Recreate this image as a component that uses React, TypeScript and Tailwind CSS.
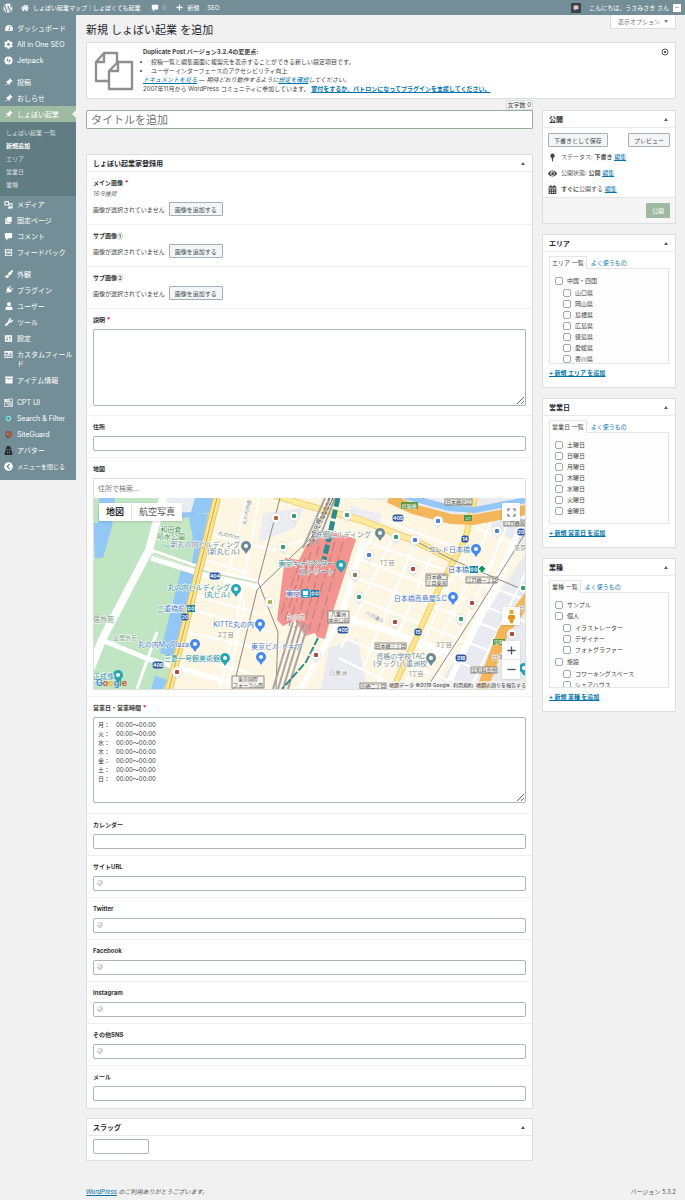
import React from "react";
import {
  FaArchive,
  FaCalendarAlt,
  FaChevronCircleLeft,
  FaCog,
  FaEye,
  FaGlobeAsia,
  FaHome,
  FaPaintBrush,
  FaPlug,
  FaPlus,
  FaTachometerAlt,
  FaUser,
  FaUserSecret,
  FaWordpress,
  FaWrench,
} from "react-icons/fa";
import { BsPinAngleFill } from "react-icons/bs";

/* ---------- small drawn icons ---------- */

function Glyph({ children, className = "size-[9px]" }: { children: React.ReactNode; className?: string }) {
  return (
    <svg viewBox="0 0 20 20" className={className} fill="currentColor" aria-hidden="true">
      {children}
    </svg>
  );
}

const bubble = <path d="M3 2h14a1 1 0 0 1 1 1v10a1 1 0 0 1-1 1h-7l-5 5v-5H3a1 1 0 0 1-1-1V3a1 1 0 0 1 1-1z" />;

const JetpackIcon = () => (
  <Glyph>
    <circle cx="10" cy="10" r="9" />
    <path d="M9.3 3v8.600H4.800zM10.700 17V8.400h4.500z" fill="#738e96" />
  </Glyph>
);
const MediaIcon = () => (
  <Glyph>
    <path d="M1 3h2l1-1h4l1 1h2v9H1zM6 4.500a3 3 0 1 0 0 6 3 3 0 0 0 0-6z" fillRule="evenodd" />
    <path d="M12 6l7 1v10a2.500 2.500 0 1 1-2-2.400V9h-3v8a2.500 2.500 0 1 1-2-2.400z" />
  </Glyph>
);
const PagesIcon = () => (
  <Glyph>
    <path d="M7 2h10v12H7z" />
    <path d="M3 5h3v10h8v3H3z" />
  </Glyph>
);
const FormIcon = () => (
  <Glyph>
    <path
      fillRule="evenodd"
      d="M2 2h16v16H2zM4 4v12h12V4zM5 6h3v2H5zM9 6h6v1.500H9zM5 9h3v2H5zM9 9h6v1.500H9zM5 12h3v2H5zM9 12h6v1.500H9z"
    />
  </Glyph>
);
const SettingsIcon = () => (
  <Glyph>
    <path fillRule="evenodd" d="M2 3h16v14H2zM6 5v6H4.500v2H6v2h1.500v-2H9v-2H7.500V5zM12.500 5v2H11v2h1.500v6H14V9h1.500V7H14V5z" />
  </Glyph>
);
const FieldsIcon = () => (
  <Glyph>
    <path fillRule="evenodd" d="M1 2h18v16H1zM3 6v4h6V6zM11 6v1.500h6V6zM11 9v1.500h6V9zM3 12v4h4v-4zM8 12v4h4v-4zM13 12v4h4v-4z" />
  </Glyph>
);
const CptIcon = () => (
  <Glyph>
    <path d="M1 2h5v7H1zM7 2h4v3H7zM7 6h4v3H7z" />
    <path d="M12 2h7v7h-7zM1 11h8v8H1zM11 11h8v8h-8z" fill="none" stroke="currentColor" strokeWidth="1.500" />
    <path d="M14 13h3v4h-3z" />
  </Glyph>
);
const RingIcon = () => (
  <Glyph>
    <circle cx="10" cy="10" r="4.500" fill="#5d7f89" stroke="#7fe3e6" strokeWidth="3" />
  </Glyph>
);
const ShieldIcon = () => (
  <Glyph>
    <path d="M3 4l7-2 7 2v7c0 4-3 6-7 8-4-2-7-4-7-8z" fill="#6f5a50" />
    <path d="M10 2l7 2v7c0 4-3 6-7 8z" fill="#a9573a" />
    <path d="M6 6h4v5H6z" fill="#c98a5e" />
  </Glyph>
);
const DismissIcon = () => (
  <Glyph className="size-2 text-[#555]">
    <circle cx="10" cy="10" r="7.500" fill="none" stroke="currentColor" strokeWidth="2.500" />
    <path d="M7 7l6 6M13 7l-6 6" stroke="currentColor" strokeWidth="2.500" />
  </Glyph>
);

/* ---------- admin menu ---------- */

type Item = { label: string; icon: React.ReactNode; tall?: boolean };

const pin = <BsPinAngleFill className="size-2" />;

const groupOne: Item[] = [
  { label: "ダッシュボード", icon: <FaTachometerAlt className="size-2" /> },
  { label: "All in One SEO", icon: <FaCog className="size-[9px]" /> },
  { label: "Jetpack", icon: <JetpackIcon /> },
];
const groupTwo: Item[] = [
  { label: "投稿", icon: pin },
  { label: "おしらせ", icon: pin },
];
const groupThree: Item[] = [
  { label: "メディア", icon: <MediaIcon /> },
  { label: "固定ページ", icon: <PagesIcon /> },
  { label: "コメント", icon: <Glyph>{bubble}</Glyph> },
  { label: "フィードバック", icon: <FormIcon /> },
];
const groupFour: Item[] = [
  { label: "外観", icon: <FaPaintBrush className="size-2" /> },
  { label: "プラグイン", icon: <FaPlug className="size-2 rotate-45" /> },
  { label: "ユーザー", icon: <FaUser className="size-2" /> },
  { label: "ツール", icon: <FaWrench className="size-2" /> },
  { label: "設定", icon: <SettingsIcon /> },
  { label: "カスタムフィールド", icon: <FieldsIcon />, tall: true },
  { label: "アイテム情報", icon: <FaArchive className="size-2" /> },
];
const groupFive: Item[] = [
  { label: "CPT UI", icon: <CptIcon /> },
  { label: "Search & Filter", icon: <RingIcon /> },
  { label: "SiteGuard", icon: <ShieldIcon /> },
  { label: "アバター", icon: <FaUserSecret className="size-[9px] text-[#23282d]" /> },
];

function MenuItem({ item }: { item: Item }) {
  return (
    <li>
      <a
        href="#"
        className={
          item.tall
            ? "flex h-[26px] items-start gap-1 pt-1 pl-1 text-[7px] leading-[9px]"
            : "flex h-4 items-center gap-1 pl-1 text-[7px] leading-[9px] whitespace-nowrap"
        }
      >
        <span className="flex size-[9px] shrink-0 items-center justify-center">{item.icon}</span>
        <span className="min-w-0 break-all">{item.label}</span>
      </a>
    </li>
  );
}

function Group({ items }: { items: Item[] }) {
  return (
    <>
      {items.map((i) => (
        <MenuItem key={i.label} item={i} />
      ))}
    </>
  );
}

function Sidebar() {
  return (
    <nav aria-label="メインメニュー" className="w-[76px] shrink-0 self-start bg-[#738e96] pt-[5px] pb-[6px] text-white">
      <ul className="flex flex-col">
        <Group items={groupOne} />
        <li className="h-[6px]" />
        <Group items={groupTwo} />
        <li>
          <a href="#" className="relative flex h-4 items-center gap-1 bg-[#9ebaa0] pl-1 text-[7px] leading-[9px]">
            <span className="flex size-[9px] shrink-0 items-center justify-center">{pin}</span>
            しょぼい起業
            <span className="absolute top-1 right-0 border-y-4 border-r-4 border-y-transparent border-r-[#f1f1f1]" />
          </a>
          <ul className="bg-[#627c83] pt-1 pb-[5px] pl-[6px] text-[6px] leading-[13px] text-[#d5dddf]">
            {["しょぼい起業 一覧", "新規追加", "エリア", "営業日", "業種"].map((s) => (
              <li key={s}>
                <a href="#" className={s === "新規追加" ? "block font-bold text-white" : "block"}>
                  {s}
                </a>
              </li>
            ))}
          </ul>
        </li>
        <Group items={groupThree} />
        <li className="h-[6px]" />
        <Group items={groupFour} />
        <li className="h-[6px]" />
        <Group items={groupFive} />
        <li>
          <button type="button" className="flex h-4 items-center gap-1 pl-1 text-[6px] leading-[9px]">
            <FaChevronCircleLeft className="size-[9px]" />
            メニューを閉じる
          </button>
        </li>
      </ul>
    </nav>
  );
}

function AdminBar() {
  return (
    <header className="flex h-[15px] items-center bg-[#738e96] pr-1 pl-[3px] text-[6px] leading-[9px] text-white">
      <a href="#" aria-label="WordPress">
        <FaWordpress className="size-[10px]" />
      </a>
      <a href="#" className="ml-2 flex items-center gap-1">
        <FaHome className="size-2" />
        しょぼい起業マップ｜しょぼくても起業
      </a>
      <a href="#" className="ml-[10px] flex items-center gap-1">
        <Glyph className="size-2">{bubble}</Glyph>
        <span className="text-[#b9c7cb]">0</span>
      </a>
      <a href="#" className="ml-[10px] flex items-center gap-1">
        <FaPlus className="size-[7px]" />
        新規
      </a>
      <a href="#" className="ml-2">
        SEO
      </a>
      <span className="ml-auto flex size-[10px] items-center justify-center rounded-[1px] bg-[#3c4245] text-[#e7c9cb]">
        <Glyph className="size-[6px]">{bubble}</Glyph>
      </span>
      <a href="#" className="ml-2 flex items-center gap-1">
        こんにちは、うさみさき さん
        <span className="flex size-2 items-center justify-center bg-white">
          <span className="h-px w-1 bg-[#b9c0c4]" />
        </span>
      </a>
    </header>
  );
}

/* ---------- shared pieces ---------- */

const link = "text-[#0073aa] underline";
const fieldBox = "block rounded-[2px] border border-[#b0b5ba] bg-white px-1 text-[#32373c]";
const smallButton = "h-[14px] rounded-[1px] border border-[#a3afb7] bg-[#f3f5f6] px-[5px] text-[6px] leading-[9px] text-[#3f4d55]";

function Box({ title, children }: { title: string; children: React.ReactNode }) {
  return (
    <section className="border border-[#dcdfe2] bg-white">
      <div className="flex h-[17px] items-center justify-between border-b border-[#e7e9eb] pr-[6px] pl-[6px]">
        <h2 className="text-[7px] leading-[9px] font-bold text-[#23282d]">{title}</h2>
        <button type="button" aria-label={`${title} を閉じる`} className="p-px">
          <span className="block border-x-2 border-b-3 border-x-transparent border-b-[#555d66]" />
        </button>
      </div>
      {children}
    </section>
  );
}

function Row({ id, label, required, children }: { id: string; label: React.ReactNode; required?: boolean; children: React.ReactNode }) {
  return (
    <div className="border-t border-[#f0f0f0] px-[6px] pt-[6px] pb-[6px] first:border-t-0">
      <label htmlFor={id} className="mb-1 block text-[6px] leading-[10px] font-bold text-[#333]">
        {label}
        {required && <span className="ml-[2px] text-[#d00]">*</span>}
      </label>
      {children}
    </div>
  );
}

function ImagePicker({ id }: { id: string }) {
  return (
    <div className="mb-[3px] flex h-3 items-center gap-1">
      <span>画像が選択されていません</span>
      <button id={id} type="button" className={smallButton}>
        画像を追加する
      </button>
    </div>
  );
}

function Numbered({ text, mark }: { text: string; mark: string }) {
  return (
    <>
      {text}
      <span className="font-['Noto_Sans_CJK_JP',sans-serif]">{mark}</span>
    </>
  );
}

function TextRow({ id, label, url }: { id: string; label: string; url?: boolean }) {
  return (
    <Row id={id} label={label}>
      <div className="relative">
        <input id={id} type={url ? "url" : "text"} className={`${fieldBox} h-[15px] w-full`} />
        {url && <FaGlobeAsia className="absolute top-1 left-1 size-[6px] text-[#c8ccd0]" />}
      </div>
    </Row>
  );
}

/* ---------- map ---------- */

type Label = { x: number; y: number; t: string; c: string; s?: number; a?: "middle" | "end"; r?: number };

const blue = "#4a78c4";
const teal = "#2a929c";
const slate = "#6f8a97";
const grey = "#8b8b86";

const mapLabels: Label[] = [
  { x: 78, y: 34, t: "和田倉", c: "#3f8f4a", a: "middle" },
  { x: 78, y: 41, t: "噴水公園", c: "#3f8f4a", a: "middle" },
  { x: 147, y: 49, t: "新丸の内ビルディング", c: slate, a: "end" },
  { x: 147, y: 56, t: "(新丸ビル)", c: slate, a: "end" },
  { x: 137, y: 92, t: "丸の内ビルディング", c: teal, a: "end" },
  { x: 137, y: 99, t: "(丸ビル)", c: teal, a: "end" },
  { x: 92, y: 113, t: "二重橋前", c: blue, a: "end" },
  { x: 0, y: 124, t: "居外苑", c: "#6c8f6f" },
  { x: 20, y: 142, t: "皇居外苑", c: "#7d9c80", s: 6 },
  { x: 161, y: 129, t: "KITTE丸の内", c: blue, a: "end" },
  { x: 125, y: 139, t: "2丁目", c: grey, s: 6 },
  { x: 96, y: 149, t: "丸の内My Plaza", c: blue, a: "end" },
  { x: 127, y: 163, t: "三菱一号館美術館", c: teal, a: "end" },
  { x: 158, y: 151, t: "東京ビル トキア", c: blue },
  { x: 0, y: 181, t: "正成像", c: teal },
  { x: 241, y: 68, t: "東京キャラクター", c: teal, a: "end" },
  { x: 241, y: 76, t: "ストリート", c: teal, a: "end" },
  { x: 207, y: 98, t: "東京", c: "#3567b8", a: "end" },
  { x: 194, y: 121, t: "丸の内", c: "#a77a78", s: 6 },
  { x: 278, y: 39, t: "鉄鋼ビルディング", c: slate, a: "end" },
  { x: 287, y: 67, t: "1丁目", c: grey, s: 6 },
  { x: 377, y: 54, t: "コレド日本橋", c: blue, a: "end" },
  { x: 376, y: 74, t: "日本橋", c: "#3567b8", a: "end" },
  { x: 354, y: 103, t: "日本橋高島屋S.C", c: blue, a: "end" },
  { x: 343, y: 149, t: "3丁目", c: grey, s: 6 },
  { x: 332, y: 161, t: "資格の学校TAC", c: slate, a: "end" },
  { x: 334, y: 168, t: "(タック)八重洲校", c: slate, a: "end" },
  { x: 316, y: 178, t: "1丁目", c: grey, s: 6 },
  { x: 236, y: 177, t: "八重洲", c: grey, s: 6 },
  { x: 272, y: 116, t: "八日通り", c: grey, s: 5, r: 27 },
  { x: 125, y: 37, t: "丸の内1st", c: grey, s: 5, r: 12 },
  { x: 153, y: 27, t: "丸の内仲通", c: grey, s: 5, r: -78 },
  { x: 222, y: 38, t: "中央線", c: "#444", s: 6, r: -68 },
  { x: 421, y: 52, t: "東京", c: grey, s: 6 },
  { x: 399, y: 161, t: "日本橋", c: grey, s: 6 },
  { x: 426, y: 112, t: "日", c: grey, s: 6 },
];

const signs = [
  { x: 235, y: 113, w: 21, l: ["八重洲", "中央口前"] },
  { x: 333, y: 76, w: 21, l: ["日本橋二", "丁目東南"] },
  { x: 373, y: 79, w: 31, l: ["江戸橋一丁目"] },
  { x: 282, y: 145, w: 31, l: ["日本橋三丁目"] },
  { x: 352, y: 1, w: 27, l: ["日本橋北詰"] },
  { x: 411, y: 22, w: 21, l: ["江戸橋南"] },
  { x: 139, y: 178, w: 32, l: ["東京国際", "フォーラム西"] },
  { x: 378, y: 169, w: 26, l: ["宝町料金所"] },
  { x: 267, y: 185, w: 26, l: ["京橋二丁目"] },
];

const pins = [
  { x: 153, y: 48, c: slate },
  { x: 143, y: 91, c: "#24a7b4" },
  { x: 167, y: 126, c: "#4688f1" },
  { x: 102, y: 146, c: "#4688f1" },
  { x: 132, y: 160, c: "#24a7b4" },
  { x: 168, y: 159, c: "#4688f1" },
  { x: 25, y: 177, c: "#24a7b4" },
  { x: 248, y: 67, c: "#24a7b4" },
  { x: 287, y: 35, c: slate },
  { x: 383, y: 51, c: "#4688f1" },
  { x: 360, y: 99, c: "#4688f1" },
  { x: 338, y: 160, c: slate },
  { x: 431, y: 170, c: "#24a7b4" },
];

const dots = [
  { x: 183, y: 20, c: "#b0683e" },
  { x: 201, y: 18, c: "#35a06b" },
  { x: 190, y: 49, c: "#35a06b" },
  { x: 254, y: 17, c: "#35a06b" },
  { x: 303, y: 39, c: "#35a06b" },
  { x: 322, y: 42, c: "#4b7fe0" },
  { x: 345, y: 23, c: "#4b7fe0" },
  { x: 404, y: 33, c: "#4b7fe0" },
  { x: 276, y: 57, c: "#4b7fe0" },
  { x: 320, y: 71, c: "#b0483e" },
  { x: 262, y: 77, c: "#8a7d5f" },
  { x: 266, y: 99, c: "#35a06b" },
  { x: 302, y: 124, c: "#b0483e" },
  { x: 379, y: 105, c: "#b0483e" },
  { x: 368, y: 121, c: "#35a06b" },
  { x: 430, y: 90, c: "#35a06b" },
  { x: 419, y: 136, c: "#b0483e" },
  { x: 84, y: 174, c: "#b0483e" },
  { x: 223, y: 157, c: "#b0483e" },
  { x: 177, y: 104, c: "#a5b957" },
];

const shields = [
  { x: 122, y: 78, t: "404" },
  { x: 65, y: 167, t: "406" },
  { x: 92, y: 119, t: "20" },
  { x: 305, y: 20, t: "405" },
  { x: 372, y: 41, t: "14" },
  { x: 250, y: 132, t: "405" },
  { x: 325, y: 134, t: "15" },
  { x: 368, y: 160, t: "316" },
  { x: 428, y: 34, t: "20" },
];

function CityMap() {
  return (
    <svg viewBox="0 0 433 191" preserveAspectRatio="xMidYMid slice" className="h-[191px] w-full" role="img" aria-label="東京駅周辺の地図">
      <rect width="433" height="191" fill="#fdf6e3" />
      {/* outer blocks */}
      <path d="M262 0h171v191h-90l92-140-50-30-30-6-60-12zM236 150l28-10 10 51h-46z" fill="#e9ebf1" />
      <path d="M258 8l30 8-2 16-30-12zM170 15l40-5-8 20-36 14z" fill="#ecedf2" />
      {/* parks and moat */}
      <path d="M0 0h126L75 191H0z" fill="#bfe5c2" />
      <path d="M0 25h20L10 60H2zM6 0h16l-3 25H5z" fill="#93c7f5" />
      <path d="M70 0h54l-4 15H66zM60 22l30-8 25 2-8 52-8-3 3-18-28 2-16-8z" fill="#93c7f5" />
      <path d="M68 22l28-3 4 22-10 10-28-6z" fill="#c4e8c4" />
      <path d="M70 0l32 0-4 14-30 2z" fill="#e8edf2" />
      <path d="M88 72l14 4-21 83-14-4zM62 178l12 4-4 9H58z" fill="#93c7f5" />
      {/* district streets */}
      <g stroke="#fff" strokeWidth="2" fill="none">
        <path d="M118 36l62 16 30-10M112 62l46 14M104 98l64 18M100 112l78 22M94 134l68 16M90 156l70 20M154 0l-22 88M166 0l-22 120-18 71M152 102l-18 89" />
        <path d="M264 60l100 38 69 26M258 78l98 36 60 22M254 96l94 38 62 24M256 118l80 34 60 24M252 140l76 32 50 19M270 42l92 34 71 26M290 22l90 34M384 30l49 22M246 160l62 31" />
        <path d="M300 38l-52 112M320 50l-50 120M338 58l-56 133M362 72l-52 119M386 62l-64 129M402 60l-62 131M420 60l-66 131M433 74l-56 117M400 18l-20 50M418 18l-26 60M282 32l-24 50" />
      </g>
      <g stroke="#fff" fill="none">
        <path d="M70 0L56 52 9 142-2 170" strokeWidth="8" />
        <path d="M9 142l46 19 82 24M55 52l60 21 55 12M58 60l50 16 62 14" strokeWidth="5" />
        <path d="M64 134L44 191" strokeWidth="3" />
        <path d="M270 44l-22 74-40 73M244 118l50 14 66 24M433 18l-80 173" strokeWidth="6" />
      </g>
      <path d="M60 55l54 19 50 11" stroke="#c4dfb8" strokeWidth="1.500" fill="none" />
      {/* arterial roads */}
      <g fill="none">
        <path d="M124 0l-19 76-29 115" stroke="#e8c668" strokeWidth="8" />
        <path d="M124 0l-19 76-29 115" stroke="#fce68f" strokeWidth="6" />
        <path d="M124 0l-19 76-29 115" stroke="#c9a95a" strokeWidth="1" />
        <path d="M178 -4l34 11 56 15 54 21 38 19" stroke="#f0cf75" strokeWidth="7" />
        <path d="M178 -4l34 11 56 15 54 21 38 19" stroke="#fdeb9f" strokeWidth="5" />
        <path d="M382 0l-10 42-27 50-45 99" stroke="#efcd70" strokeWidth="6" />
        <path d="M382 0l-10 42-27 50-45 99" stroke="#fde68f" strokeWidth="4" />
        <path d="M312 -2l44 12 26 2 51-10" stroke="#93c7f5" strokeWidth="6" />
        <path d="M296 0l24 11 38 10 22 1 53-10" stroke="#f4b65a" strokeWidth="10" />
        <path d="M438 96l-28 38-22 60" stroke="#f4b65a" strokeWidth="11" />
        <path d="M322 43l38 19 73 31M433 34l-50 80-50 77M187 0l-22 84 20 50-2 57M164 92l-24 99M164 92L222 36 240 0" stroke="#8c8a86" strokeWidth="1" />
      </g>
      {/* railway station */}
      <path d="M192 60l14 2 8-16 22-13 27 8-28 88-3 12-8-2-2-4-10 3-10-16-12 6-6-6z" fill="#f2948f" />
      <g fill="none" stroke="#a9a4a4" strokeWidth="2">
        <path d="M232 0l-22 50M237 0l-20 48M242 0l-18 46" />
        <path d="M200 124l-20 67M205 124l-20 67M210 124l-20 67M215 126l-20 65" />
      </g>
      <path d="M236 0l-22 50M240 0l-20 44" fill="none" stroke="#666" strokeWidth="1" strokeDasharray="3 2" />
      <g fill="none" stroke="#b97b7b" strokeWidth="1" strokeDasharray="10 4">
        <path d="M206 66l-18 50M212 60l-20 62M218 54l-22 74M226 48l-24 82M234 44l-24 86M242 44l-26 88M250 44l-26 92" />
      </g>
      <path d="M245 0l-14 62" stroke="#2b8c8c" strokeWidth="5" strokeDasharray="9 3" fill="none" />
      <path d="M225 140l-12 24-24 27" stroke="#2b8c8c" strokeWidth="2" strokeDasharray="8 2" fill="none" />

      {dots.map((d) => (
        <g key={`${d.x}-${d.y}`}>
          <path d={`M${d.x - 4} ${d.y + 2}l4 5 4-5z`} fill="#fff" stroke="#c9c9c9" strokeWidth=".5" />
          <circle cx={d.x} cy={d.y} r="5" fill="#fff" stroke="#c9c9c9" strokeWidth=".5" />
          <rect x={d.x - 2} y={d.y - 2} width="4" height="4" rx="1" fill={d.c} />
        </g>
      ))}
      {pins.map((p) => (
        <g key={`${p.x}-${p.y}`}>
          <path d={`M${p.x - 4} ${p.y + 2}l4 6 4-6z`} fill={p.c} />
          <circle cx={p.x} cy={p.y} r="5" fill={p.c} />
          <circle cx={p.x} cy={p.y} r="2" fill="#fff" />
        </g>
      ))}
      {signs.map((s) => (
        <g key={s.l[0]}>
          <rect x={s.x} y={s.y} width={s.w} height={s.l.length * 6} fill="#f4f2ec" stroke="#77736b" strokeWidth=".8" />
          {s.l.map((t, i) => (
            <text key={t} x={s.x + s.w / 2} y={s.y + 5 + i * 6} fontSize="5" textAnchor="middle" fill="#555">
              {t}
            </text>
          ))}
        </g>
      ))}
      {shields.map((s) => (
        <g key={`${s.x}-${s.y}`}>
          <rect x={s.x - s.t.length * 1.800} y={s.y - 3.500} width={s.t.length * 3.600} height="7" rx="2.500" fill="#2f56a3" />
          <text x={s.x} y={s.y + 2} fontSize="5" fontWeight="700" textAnchor="middle" fill="#fff">
            {s.t}
          </text>
        </g>
      ))}
      <g fontSize="5" fill="#fff" textAnchor="middle">
        <rect x="308" y="4" width="17" height="7" fill="#5f9a45" />
        <text x="316" y="10">呉服橋</text>
        <rect x="371" y="17" width="8" height="6" rx="1" fill="#4c9a49" />
        <text x="375" y="22" fontSize="4">C1</text>
        <rect x="400" y="141" width="12" height="6" fill="#5f9a45" />
        <text x="406" y="146">宝町</text>
      </g>
      {mapLabels.map((l) => (
        <text
          key={`${l.t}-${l.x}-${l.y}`}
          x={l.x}
          y={l.y}
          fontSize={l.s ?? 7}
          fill={l.c}
          textAnchor={l.a ?? "start"}
          stroke="#fff"
          strokeWidth="1"
          paintOrder="stroke"
          transform={l.r ? `rotate(${l.r} ${l.x} ${l.y})` : undefined}
        >
          {l.t}
        </text>
      ))}
      {/* station marks */}
      <rect x="208" y="91" width="9" height="9" rx="2" fill="#28a0dc" />
      <path d="M210 93h5v4h-5zM210 99l1-1h3l1 1z" fill="#fff" />
      {[
        { x: 218, y: 92 },
        { x: 94, y: 107 },
        { x: 377, y: 68 },
      ].map((m) => (
        <g key={m.x}>
          <rect x={m.x} y={m.y} width="8" height="7" fill="#1483a6" />
          <path d={`M${m.x + 1} ${m.y + 2}h2v3h-2zM${m.x + 5} ${m.y + 2}h2v3h-2z`} fill="none" stroke="#fff" strokeWidth=".8" />
        </g>
      ))}
      <rect x="385" y="67" width="8" height="8" fill="#fff" />
      <path d="M389 68l3 3-2 1v2h-2v-2l-2-1z" fill="#0c9b50" stroke="#0c9b50" />

      {/* attribution strip */}
      <rect x="294" y="183" width="139" height="8" fill="#f5f5f5" fillOpacity=".7" />
      <g fontSize="5" fill="#333">
        <text x="296" y="189">地図データ ©2019 Google</text>
        <text x="360" y="189">利用規約</text>
        <text x="383" y="189">地図の誤りを報告する</text>
      </g>
      <text x="3" y="188" fontSize="9" fontWeight="600">
        <tspan fill="#4285f4">G</tspan>
        <tspan fill="#ea4335">o</tspan>
        <tspan fill="#fbbc05">o</tspan>
        <tspan fill="#4285f4">g</tspan>
        <tspan fill="#34a853">l</tspan>
        <tspan fill="#ea4335">e</tspan>
      </text>
    </svg>
  );
}

function MapField() {
  return (
    <div className="border border-[#dfdfdf]">
      <input
        id="map"
        type="text"
        placeholder="住所で検索..."
        className="block h-[19px] w-full bg-white px-1 text-[7px] leading-[9px] text-[#444] placeholder:text-[#777]"
      />
      <div className="relative">
        <CityMap />
        <div className="absolute top-[5px] left-[5px] flex bg-white text-[9px] leading-[18px] shadow-sm">
          <button type="button" className="border-r border-[#e6e6e6] px-[7px] font-medium text-black">
            地図
          </button>
          <button type="button" className="px-[7px] text-[#565656]">
            航空写真
          </button>
        </div>
        <button
          type="button"
          aria-label="全画面表示"
          className="absolute top-[5px] right-[5px] flex size-[18px] items-center justify-center bg-white text-[#666] shadow-sm"
        >
          <Glyph className="size-[9px]">
            <path d="M1 1h6v2.500H3.500V7H1zM13 1h6v6h-2.500V3.500H13zM1 13h2.500v3.500H7V19H1zM16.500 13H19v6h-6v-2.500h3.500z" />
          </Glyph>
        </button>
        <div className="absolute right-[5px] bottom-[10px] flex w-[18px] flex-col gap-4">
          <button type="button" aria-label="ストリートビュー" className="flex h-[18px] items-center justify-center bg-white shadow-sm">
            <Glyph className="size-[15px]">
              <circle cx="10" cy="4" r="3" fill="#f0a62b" />
              <path d="M6 8h8l1 5-2 1-1 5H8l-1-5-2-1z" fill="#e8951c" />
            </Glyph>
          </button>
          <div className="flex flex-col bg-white text-[#555] shadow-sm">
            <button type="button" aria-label="拡大" className="flex h-[19px] items-center justify-center border-b border-[#e6e6e6]">
              <Glyph className="size-[9px]">
                <path d="M8.500 1h3v7.500H19v3h-7.500V19h-3v-7.500H1v-3h7.500z" />
              </Glyph>
            </button>
            <button type="button" aria-label="縮小" className="flex h-[19px] items-center justify-center">
              <Glyph className="size-[9px]">
                <path d="M1 8.500h18v3H1z" />
              </Glyph>
            </button>
          </div>
        </div>
      </div>
    </div>
  );
}

/* ---------- side boxes ---------- */

type Term = { label: string; children?: string[] };

function Check({ label }: { label: string }) {
  return (
    <label className="flex h-[11px] items-center gap-1">
      <input type="checkbox" className="size-2 appearance-none rounded-[2px] border border-[#a0a8ae] bg-white checked:bg-[#738e96]" />
      {label}
    </label>
  );
}

function TermBox({ title, terms, height }: { title: string; terms: Term[]; height: string }) {
  return (
    <Box title={title}>
      <div className="px-[6px] pt-1 pb-[10px]">
        <div className="flex text-[6px] leading-[9px]">
          <button type="button" className="relative z-10 -mb-px border border-b-0 border-[#e3e5e7] bg-[#fdfdfd] px-[2px] pt-px pb-[2px]">
            {title} 一覧
          </button>
          <button type="button" className="px-1 pt-px text-[#0073aa]">
            よく使うもの
          </button>
        </div>
        <div className={`${height} overflow-hidden border border-[#e3e5e7] bg-[#fdfdfd] pt-[6px] pl-[5px]`}>
          <ul>
            {terms.map((t) => (
              <li key={t.label}>
                <Check label={t.label} />
                {t.children && (
                  <ul className="my-px pl-2">
                    {t.children.map((c) => (
                      <li key={c}>
                        <Check label={c} />
                      </li>
                    ))}
                  </ul>
                )}
              </li>
            ))}
          </ul>
        </div>
        <a href="#" className={`${link} mt-1 block font-bold`}>
          + 新規 {title} を追加
        </a>
      </div>
    </Box>
  );
}

function PublishBox() {
  return (
    <Box title="公開">
      <div className="px-[5px] pt-[5px]">
        <div className="flex justify-between">
          <button type="button" className={smallButton}>
            下書きとして保存
          </button>
          <button type="button" className={smallButton}>
            プレビュー
          </button>
        </div>
        <ul className="mt-[2px] leading-4 text-[#555]">
          <li className="flex items-center gap-1">
            <Glyph className="size-[9px] text-[#444]">
              <path d="M10 1a5 5 0 0 1 2 9.500L10.700 19H9.300L8 10.500A5 5 0 0 1 10 1z" />
            </Glyph>
            <span>
              ステータス: <b>下書き</b>{" "}
              <a href="#" className={link}>
                編集
              </a>
            </span>
          </li>
          <li className="flex items-center gap-1">
            <FaEye className="size-[9px] text-[#444]" />
            <span>
              公開状態: <b>公開</b>{" "}
              <a href="#" className={link}>
                編集
              </a>
            </span>
          </li>
          <li className="flex items-center gap-1">
            <FaCalendarAlt className="size-[9px] text-[#444]" />
            <span>
              <b>すぐに</b>公開する{" "}
              <a href="#" className={link}>
                編集
              </a>
            </span>
          </li>
        </ul>
      </div>
      <div className="flex justify-end border-t border-[#e3e5e7] bg-[#f5f5f5] px-[5px] py-[5px]">
        <button type="submit" className="h-[15px] rounded-[1px] bg-[#9ebaa0] px-[6px] text-[6px] leading-[9px] text-white">
          公開
        </button>
      </div>
    </Box>
  );
}

const hours = ["月", "火", "水", "木", "金", "土", "日"].map((d) => `${d}：　00:00〜00:00`).join("\n");

export default function App() {
  return (
    <div className="min-h-screen bg-[#f1f1f1] font-['Inter','Noto_Sans_CJK_JP',sans-serif] text-[6px] leading-[9px] text-[#444]">
      <AdminBar />
      <div className="flex">
        <Sidebar />
        <main className="min-w-0 flex-1 pr-[9px] pl-[10px]">
          <div className="flex h-[27px] items-start justify-between">
            <h1 className="pt-2 text-[11px] leading-[14px] text-[#23282d]">新規 しょぼい起業 を追加</h1>
            <button
              type="button"
              className="flex h-[14px] items-center gap-1 border border-t-0 border-[#dcdfe2] bg-white px-[7px] text-[6px] leading-[9px] text-[#72777c]"
            >
              表示オプション <span className="text-[4px]">▼</span>
            </button>
          </div>

          <div className="relative flex h-[57px] gap-[9px] border border-[#dcdfe2] bg-white pt-1 pl-[7px]">
            <svg viewBox="0 0 40 40" className="mt-1 size-10 shrink-0" fill="#fff" stroke="#8f8f8f" strokeWidth="2.400" strokeLinejoin="round">
              <path d="M10 2h13v28H2V11zM10 2v9H2" />
              <path d="M24 11h14v27H15V20zM24 11v9h-9" />
            </svg>
            <div className="min-w-0">
              <p className="font-bold">Duplicate Post バージョン3.2.4の変更点:</p>
              <ul className="mt-px list-disc pl-2 leading-[9px]">
                <li>投稿一覧と編集画面に複製元を表示することができる新しい設定項目です。</li>
                <li>ユーザーインターフェースのアクセシビリティ向上</li>
              </ul>
              <p className="italic">
                <a href="#" className={link}>
                  ドキュメントを見る
                </a>{" "}
                — 期待どおり動作するように
                <a href="#" className={link}>
                  設定を確認
                </a>
                してください。
              </p>
              <p>
                2007年11月から WordPress コミュニティに参加しています。{" "}
                <a href="#" className={`${link} font-bold`}>
                  寄付をするか、パトロンになってプラグインを支援してください。
                </a>
              </p>
            </div>
            <button type="button" aria-label="この通知を非表示にする" className="absolute top-[5px] right-[6px]">
              <DismissIcon />
            </button>
          </div>

          <div className="mt-px flex items-start gap-[9px]">
            <div className="min-w-0 flex-1">
              <div className="flex h-[10px] justify-end">
                <span className="border border-[#dcdfe2] bg-[#f7f7f7] px-px leading-[8px]">文字数 0</span>
              </div>
              <input
                type="text"
                aria-label="タイトルを追加"
                placeholder="タイトルを追加"
                className="block h-[19px] w-full rounded-[1px] border border-[#9bafa0] bg-white px-1 text-[11px] leading-[14px] placeholder:text-[#72777c]"
              />
              <div className="mt-[25px]">
                <Box title="しょぼい起業家登録用">
                  <div className="pb-px">
                    <div className="px-[6px] pt-[6px] pb-[6px]">
                      <label htmlFor="main-image" className="block leading-[10px] font-bold text-[#333]">
                        メイン画像<span className="ml-[2px] text-[#d00]">*</span>
                      </label>
                      <p className="mb-1 leading-[11px] text-[#666] italic">16:9推奨</p>
                      <ImagePicker id="main-image" />
                    </div>
                    <div className="border-t border-[#f0f0f0]">
                      <Row id="sub-image-1" label={<Numbered text="サブ画像" mark="①" />}>
                        <ImagePicker id="sub-image-1" />
                      </Row>
                    </div>
                    <div className="border-t border-[#f0f0f0]">
                      <Row id="sub-image-2" label={<Numbered text="サブ画像" mark="②" />}>
                        <ImagePicker id="sub-image-2" />
                      </Row>
                    </div>
                    <div className="border-t border-[#f0f0f0] pb-[3px]">
                      <Row id="description" label="説明" required>
                        <textarea id="description" className={`${fieldBox} h-[77px] w-full`} />
                      </Row>
                    </div>
                    <TextRow id="address" label="住所" />
                    <div className="border-t border-[#f0f0f0]">
                      <Row id="map" label="地図">
                        <MapField />
                      </Row>
                    </div>
                    <div className="border-t border-[#f0f0f0] pb-1">
                      <Row id="hours" label="営業日・営業時間" required>
                        <textarea id="hours" defaultValue={hours} className={`${fieldBox} h-[86px] w-full py-[2px] leading-[9px]`} />
                      </Row>
                    </div>
                    <TextRow id="calendar" label="カレンダー" />
                    <TextRow id="site-url" label="サイトURL" url />
                    <TextRow id="twitter" label="Twitter" url />
                    <TextRow id="facebook" label="Facebook" url />
                    <TextRow id="instagram" label="Instagram" url />
                    <TextRow id="other-sns" label="その他SNS" url />
                    <TextRow id="mail" label="メール" />
                  </div>
                </Box>
              </div>
              <div className="mt-[9px]">
                <Box title="スラッグ">
                  <div className="px-[6px] pt-[3px] pb-[6px]">
                    <input type="text" aria-label="スラッグ" className={`${fieldBox} h-[15px] w-14`} />
                  </div>
                </Box>
              </div>
            </div>

            <aside className="flex w-[134px] shrink-0 flex-col gap-[10px] pt-[10px]">
              <PublishBox />
              <TermBox
                title="エリア"
                height="h-24"
                terms={[{ label: "中国・四国", children: ["山口県", "岡山県", "島根県", "広島県", "徳島県", "愛媛県", "香川県"] }]}
              />
              <TermBox
                title="営業日"
                height="h-[92px]"
                terms={["土曜日", "日曜日", "月曜日", "木曜日", "水曜日", "火曜日", "金曜日"].map((label) => ({ label }))}
              />
              <TermBox
                title="業種"
                height="h-24"
                terms={[
                  { label: "サンプル" },
                  { label: "個人", children: ["イラストレーター", "デザイナー", "フォトグラファー"] },
                  { label: "施設", children: ["コワーキングスペース", "シェアハウス"] },
                ]}
              />
            </aside>
          </div>

          <footer className="mt-[26px] flex justify-between pb-1 text-[#555]">
            <p className="italic">
              <a href="#" className={link}>
                WordPress
              </a>{" "}
              のご利用ありがとうございます。
            </p>
            <p>バージョン 5.3.2</p>
          </footer>
        </main>
      </div>
    </div>
  );
}
